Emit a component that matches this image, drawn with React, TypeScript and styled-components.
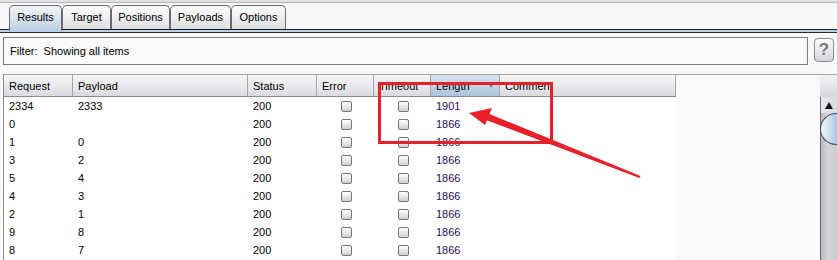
import React from "react";
import styled, { createGlobalStyle } from "styled-components";

const GlobalStyle = createGlobalStyle`
  html, body { margin: 0; padding: 0; background: #f8f8f8; }
  body { font-family: "Liberation Sans", Arial, sans-serif; font-size: 11px; color: #000; }
`;

const Page = styled.div`
  position: relative;
  width: 837px;
  height: 260px;
  overflow: hidden;
  background: #f8f8f8;
`;

const TopStrip = styled.div`
  height: 2px;
  background: #e2e2e4;
  border-bottom: 1px solid #b4b4b8;
`;

const TabBar = styled.div`
  display: flex;
  align-items: flex-end;
  height: 26px;
  padding-left: 9px;
`;

const Tab = styled.div<{ $w: number; $active?: boolean }>`
  position: relative;
  z-index: ${(p) => (p.$active ? 2 : 1)};
  box-sizing: border-box;
  width: ${(p) => p.$w}px;
  height: ${(p) => (p.$active ? 26 : 24)}px;
  margin-bottom: ${(p) => (p.$active ? -2 : 0)}px;
  border: 1px solid #6c6c70;
  border-bottom: none;
  border-radius: 5px 5px 0 0;
  background: ${(p) =>
    p.$active
      ? "linear-gradient(#f2f5f9 0%, #d6e2ee 55%, #b9cfe3 100%)"
      : "linear-gradient(#fbfbfb 0%, #ececee 60%, #dedee2 100%)"};
  display: flex;
  align-items: center;
  justify-content: center;
  padding-bottom: ${(p) => (p.$active ? 3 : 1)}px;
  font-size: 11px;
`;

const TabLine = styled.div`
  height: 2px;
  border-top: 1px solid #1e1e22;
  border-bottom: 1px solid #2a2a30;
  background: #b9d0e6;
`;

const FilterRow = styled.div`
  display: flex;
  align-items: flex-start;
  gap: 6px;
  padding: 4px 3px 0 3px;
`;

const FilterBox = styled.div`
  flex: 1;
  box-sizing: border-box;
  height: 28px;
  border: 1px solid #7c7c80;
  background: #fafafa;
  display: flex;
  align-items: center;
  padding-left: 6px;
  white-space: pre;
`;

const HelpButton = styled.div`
  box-sizing: border-box;
  width: 20px;
  height: 24px;
  margin-top: 1px;
  border: 1px solid #8c8c90;
  border-radius: 4px;
  background: linear-gradient(#fdfdfd, #e6e6e8 60%, #d4d4d8);
  display: flex;
  align-items: center;
  justify-content: center;
  color: #7a7a7e;
  font-weight: bold;
  font-size: 17px;
`;

const TableArea = styled.div`
  margin: 9px 0 0 3px;
  display: flex;
  border-top: 1px solid #a2a2a8;
  border-left: 1px solid #8c8c90;
  height: 200px;
`;

const Viewport = styled.div`
  flex: 1;
  display: flex;
  flex-direction: column;
  background: #f9f9f9;
`;

const HeaderRow = styled.div`
  display: flex;
`;

const HeaderCell = styled.div<{ $w: number; $sorted?: boolean }>`
  position: relative;
  box-sizing: border-box;
  width: ${(p) => p.$w}px;
  height: 22px;
  border-right: 1px solid #a4a4aa;
  border-bottom: 1px solid #8a8a90;
  background: ${(p) =>
    p.$sorted
      ? "linear-gradient(#d6e3ef, #bfd2e4 60%, #adc4da)"
      : "linear-gradient(#f6f6f8, #e8e8ec 60%, #dadade)"};
  padding-left: 5px;
  display: flex;
  align-items: center;
`;

const SortArrow = styled.span`
  position: absolute;
  right: 5px;
  top: 8px;
  width: 0;
  height: 0;
  border-left: 3px solid transparent;
  border-right: 3px solid transparent;
  border-top: 5px solid #5f7e9c;
`;

const Row = styled.div`
  display: flex;
  height: 18px;
`;

const Cell = styled.div<{ $w: number; $center?: boolean; $color?: string }>`
  box-sizing: border-box;
  width: ${(p) => p.$w}px;
  height: 18px;
  background: #fff;
  padding-left: ${(p) => (p.$center ? 0 : 5)}px;
  display: flex;
  align-items: center;
  justify-content: ${(p) => (p.$center ? "center" : "flex-start")};
  color: ${(p) => p.$color || "#000"};
`;

const Check = styled.div`
  box-sizing: border-box;
  width: 11px;
  height: 11px;
  margin-left: 2px;
  border: 1px solid #76767c;
  border-radius: 2px;
  background: linear-gradient(#ffffff, #e4e4e8 60%, #cfcfd4);
`;

const ScrollCol = styled.div`
  width: 17px;
  display: flex;
  flex-direction: column;
`;

const ScrollCorner = styled.div`
  height: 22px;
  background: linear-gradient(#f2f2f4, #e4e4e8 60%, #d8d8dc);
`;

const ScrollTrack = styled.div`
  flex: 1;
  border-left: 1px solid #6a6a70;
  background: linear-gradient(to right, #b8b8c0, #d4d4da 40%, #cacad0);
  display: flex;
  flex-direction: column;
  align-items: center;
`;

const UpButton = styled.div`
  width: 16px;
  height: 16px;
  display: flex;
  align-items: center;
  justify-content: center;
  background: linear-gradient(to right, #e8e8ec, #dcdce0);
`;

const UpTri = styled.span`
  width: 0;
  height: 0;
  border-left: 4px solid transparent;
  border-right: 4px solid transparent;
  border-bottom: 7px solid #111;
`;

const Thumb = styled.div`
  box-sizing: border-box;
  width: 17px;
  height: 32px;
  margin-left: -1px;
  border: 1px solid #3e4e60;
  border-right: none;
  border-radius: 16px 0 0 16px;
  background: linear-gradient(to right, #eef4fa, #d0e0ee 50%, #b0c6dc);
`;

const Overlay = styled.svg`
  position: absolute;
  left: 0;
  top: 0;
  pointer-events: none;
`;

const tabs = [
  { label: "Results", w: 53, active: true },
  { label: "Target", w: 49 },
  { label: "Positions", w: 59 },
  { label: "Payloads", w: 61 },
  { label: "Options", w: 55 },
];

const cols = [
  { label: "Request", w: 69 },
  { label: "Payload", w: 175 },
  { label: "Status", w: 69 },
  { label: "Error", w: 57 },
  { label: "Timeout", w: 57 },
  { label: "Length", w: 69, sorted: true },
  { label: "Comment", w: 176 },
];

const rows: [string, string, string][] = [
  ["2334", "2333", "1901"],
  ["0", "", "1866"],
  ["1", "0", "1866"],
  ["3", "2", "1866"],
  ["5", "4", "1866"],
  ["4", "3", "1866"],
  ["2", "1", "1866"],
  ["9", "8", "1866"],
  ["8", "7", "1866"],
];

export default function App() {
  return (
    <Page>
      <GlobalStyle />
      <TopStrip />
      <TabBar>
        {tabs.map((t) => (
          <Tab key={t.label} $w={t.w} $active={t.active}>
            {t.label}
          </Tab>
        ))}
      </TabBar>
      <TabLine />
      <FilterRow>
        <FilterBox>Filter:  Showing all items</FilterBox>
        <HelpButton>?</HelpButton>
      </FilterRow>
      <TableArea>
        <Viewport>
          <HeaderRow>
            {cols.map((c) => (
              <HeaderCell key={c.label} $w={c.w} $sorted={c.sorted}>
                {c.label}
                {c.sorted && <SortArrow />}
              </HeaderCell>
            ))}
          </HeaderRow>
          {rows.map((r, i) => (
            <Row key={i}>
              <Cell $w={69}>{r[0]}</Cell>
              <Cell $w={175}>{r[1]}</Cell>
              <Cell $w={69}>200</Cell>
              <Cell $w={57} $center>
                <Check />
              </Cell>
              <Cell $w={57} $center>
                <Check />
              </Cell>
              <Cell $w={69} $color="#2c1058">
                {r[2]}
              </Cell>
              <Cell $w={176} />
            </Row>
          ))}
        </Viewport>
        <ScrollCol>
          <ScrollCorner />
          <ScrollTrack>
            <UpButton>
              <UpTri />
            </UpButton>
            <Thumb />
          </ScrollTrack>
        </ScrollCol>
      </TableArea>
      <Overlay width={837} height={260} viewBox="0 0 837 260">
        <rect x={379.5} y={83.5} width={172} height={59} fill="none" stroke="#e8202a" strokeWidth={3} />
        <polygon points="639.5,178 640.5,176 487,113 486,120" fill="#e8202a" />
        <polygon points="469,113 492,108 485,125" fill="#e8202a" />
      </Overlay>
    </Page>
  );
}
